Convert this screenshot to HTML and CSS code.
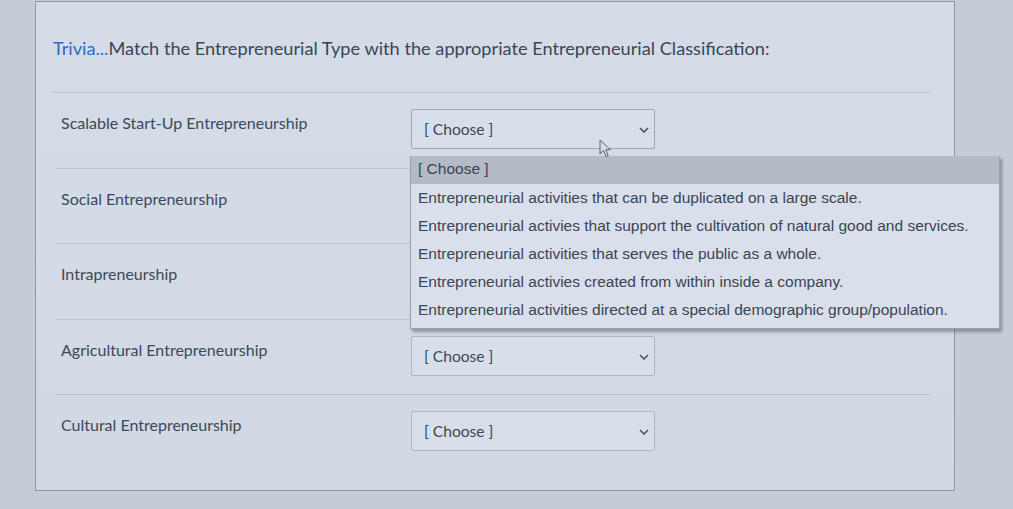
FILE: index.html
```html
<!DOCTYPE html>
<html>
<head>
<meta charset="utf-8">
<link rel="stylesheet" href="styles.css">
</head>
<body>
<div class="page">
  <div class="card">
    <h1 class="title"><span class="trivia">Trivia...</span>Match the Entrepreneurial Type with the appropriate Entrepreneurial Classification:</h1>
    <div class="rows">
      <div class="row">
        <div class="label">Scalable Start-Up Entrepreneurship</div>
        <div class="select-wrap">
          <div class="select open"><span>[ Choose ]</span><svg class="chev" width="10" height="6" viewBox="0 0 10 6"><path d="M1 1 L5 5 L9 1" fill="none" stroke="#4a5462" stroke-width="1.6"/></svg></div>
          <svg class="cursor" width="14" height="20" viewBox="0 0 14 20"><path d="M1 1 L1 15 L4.5 11.5 L7 17.5 L9.2 16.6 L6.8 10.8 L11.5 10.8 Z" fill="#d6dde8" stroke="#5a6270" stroke-width="1"/></svg>
          <ul class="menu">
            <li class="sel">[ Choose ]</li>
            <li>Entrepreneurial activities that can be duplicated on a large scale.</li>
            <li>Entrepreneurial activies that support the cultivation of natural good and services.</li>
            <li>Entrepreneurial activities that serves the public as a whole.</li>
            <li>Entrepreneurial activies created from within inside a company.</li>
            <li>Entrepreneurial activities directed at a special demographic group/population.</li>
          </ul>
        </div>
      </div>
      <div class="row">
        <div class="label">Social Entrepreneurship</div>
        <div class="select-wrap"><div class="select covered"><span>[ Choose ]</span></div></div>
      </div>
      <div class="row">
        <div class="label">Intrapreneurship</div>
        <div class="select-wrap"><div class="select covered"><span>[ Choose ]</span></div></div>
      </div>
      <div class="row">
        <div class="label">Agricultural Entrepreneurship</div>
        <div class="select-wrap"><div class="select"><span>[ Choose ]</span><svg class="chev" width="10" height="6" viewBox="0 0 10 6"><path d="M1 1 L5 5 L9 1" fill="none" stroke="#4a5462" stroke-width="1.6"/></svg></div></div>
      </div>
      <div class="row last">
        <div class="label">Cultural Entrepreneurship</div>
        <div class="select-wrap"><div class="select"><span>[ Choose ]</span><svg class="chev" width="10" height="6" viewBox="0 0 10 6"><path d="M1 1 L5 5 L9 1" fill="none" stroke="#4a5462" stroke-width="1.6"/></svg></div></div>
      </div>
    </div>
  </div>
</div>
</body>
</html>
```

FILE: styles.css
```css
* { box-sizing: border-box; }
html, body { margin: 0; padding: 0; }
body {
  width: 1013px;
  height: 509px;
  overflow: hidden;
  background: #c4ccd8;
  font-family: Lato, "Open Sans", sans-serif;
}
.page {
  padding: 1px 0 0 35px;
}
.card {
  width: 920px;
  height: 490px;
  border: 1px solid #8f98a6;
  background: linear-gradient(180deg, #d4dce8 0%, #d3dbe7 60%, #d1d8e3 100%);
  padding: 0 24px 0 20px;
}
.title {
  margin: 0;
  padding: 34px 0 0 0;
  height: 91px;
  font-size: 18.2px;
  line-height: 24px;
  font-weight: 400;
  color: #3b4656;
  border-bottom: 1px solid #bcc4d0;
  margin-left: -3px;
}
.trivia { color: #2f6ac6; }
.rows { display: flex; flex-direction: column; }
.row {
  display: flex;
  align-items: flex-start;
  height: 75.5px;
  border-bottom: 1px solid #bcc4d0;
  padding-top: 16px;
}
.row.last { border-bottom: none; }
.label {
  width: 355px;
  padding-left: 5px;
  margin-top: 4px;
  font-size: 16px;
  line-height: 20px;
  color: #3d4858;
}
.select-wrap { position: relative; }
.select {
  width: 244px;
  height: 40px;
  border: 1px solid #aeb6c2;
  border-radius: 2px;
  background: #d8dfea;
  display: flex;
  align-items: center;
  justify-content: space-between;
  padding: 0 5px 0 12px;
  font-size: 15.6px;
  color: #3d4858;
}
.select.covered { visibility: hidden; }
.select.open { border-color: #9ea7b4; }
.chev { margin-top: 2px; }
.cursor {
  position: absolute;
  left: 188px;
  top: 30px;
  z-index: 3;
}
.menu {
  position: absolute;
  left: -1px;
  top: 47px;
  width: 590px;
  margin: 0;
  padding: 0 0 4px 0;
  list-style: none;
  background: #d9e0eb;
  border: 1px solid #9aa2ae;
  border-top-color: #b6bdc8;
  box-shadow: 2px 3px 3px rgba(60, 66, 80, 0.45);
  font-family: "Liberation Sans", Arial, sans-serif;
  font-size: 15.5px;
  color: #3a4454;
  z-index: 2;
}
.menu li {
  height: 28px;
  line-height: 28px;
  padding-left: 7px;
  white-space: nowrap;
}
.menu li.sel {
  background: #b4bbc7;
  height: 27px;
  line-height: 24px;
}
```
